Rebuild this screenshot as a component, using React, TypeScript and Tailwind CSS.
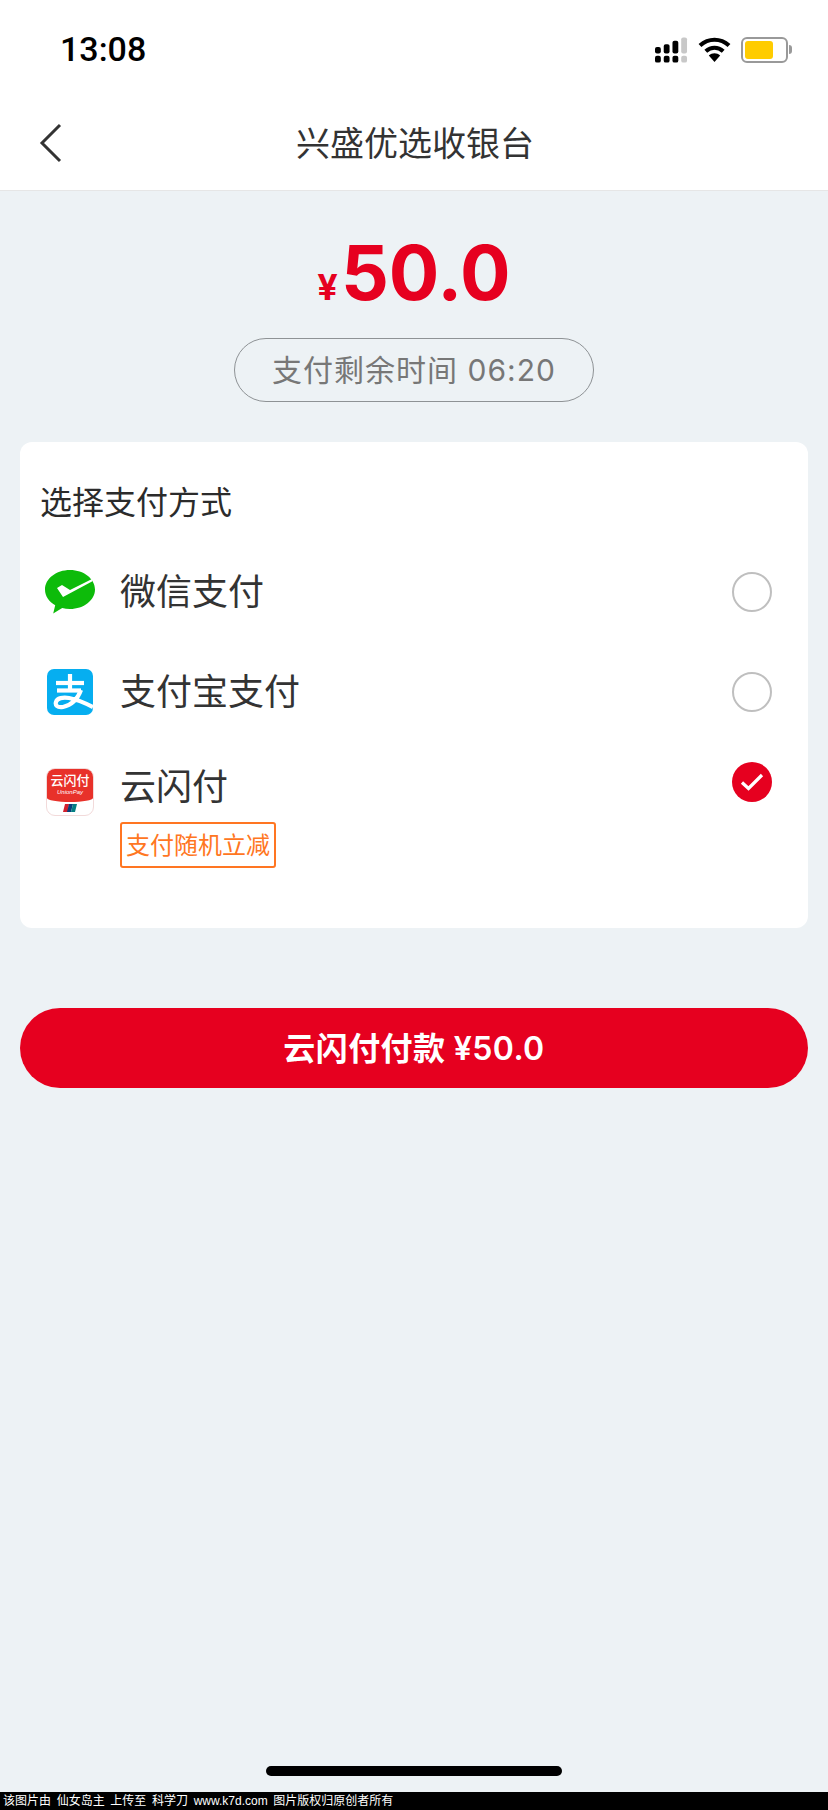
const cjk = "font-['Inter','Noto_Sans_CJK_SC',sans-serif]";

const StatusIcons = () => (
  <div className="flex items-center gap-[10px]">
    {/* signal */}
    <svg className="ml-[1px]" width="33" height="26" viewBox="0 0 34 26">
      <rect x="0" y="10" width="6" height="6.5" rx="2" fill="#000" />
      <rect x="9" y="7" width="6" height="9.5" rx="2" fill="#000" />
      <rect x="18" y="3.5" width="6" height="13" rx="2" fill="#000" />
      <rect x="27" y="0" width="6" height="16.5" rx="2" fill="#c8c8c8" />
      <rect x="0" y="19" width="6" height="7" rx="2" fill="#000" />
      <rect x="9" y="19" width="6" height="7" rx="2" fill="#000" />
      <rect x="18" y="19" width="6" height="7" rx="2" fill="#000" />
      <rect x="27" y="19" width="6" height="7" rx="2" fill="#c8c8c8" />
    </svg>
    {/* wifi */}
    <svg width="33" height="25" viewBox="0 0 33 25">
      <path d="M2 8.5C10.5 .8 22.5 .8 31 8.5" fill="none" stroke="#000" strokeWidth="4.2" />
      <path d="M7.8 14.2C13 9.6 20 9.6 25.2 14.2" fill="none" stroke="#000" strokeWidth="4.2" />
      <path d="M10.8 18.5C14.2 15.6 18.8 15.6 22.2 18.5L16.5 25Z" fill="#000" />
    </svg>
    {/* battery */}
    <div className="flex items-center">
      <div className="flex h-[26px] w-[47px] items-center rounded-[6px] border-2 border-[#999] pl-[2px]">
        <div className="h-[18px] w-[28px] rounded-[3px] bg-[#ffcc00]" />
      </div>
      <div className="ml-[1px] h-[9px] w-[3px] rounded-r-full bg-[#999]" />
    </div>
  </div>
);

const WeChatIcon = () => (
  <svg width="50" height="44" viewBox="0 0 50 44">
    <path
      d="M25 0C11.2 0 0 8.6 0 19.5c0 6.6 4 12.2 10.200 15.800L8.200 43.400l9-5.400c2.400.6 5 1 7.800 1 13.800 0 25-8.800 25-19.500S38.800 0 25 0Z"
      fill="#0dbb0a"
    />
    <path d="M12 18l5-3 8 5 22-11v2.500L18 27Z" fill="#fff" />
  </svg>
);

const AlipayIcon = () => (
  <svg width="46" height="46" viewBox="0 0 46 46">
    <rect width="46" height="46" rx="7" fill="#06aef0" />
    <g fill="none" stroke="#fff" strokeWidth="4.2">
      <path d="M9 14h28" />
      <path d="M23 5v15" />
      <path d="M34 21c-3 8-9 15-18 17-6 1-8-2-7-5 1-4 7-5 13-4 8 1.500 16 5 24 9" />
      <path d="M10 21.500h24" />
    </g>
  </svg>
);

const UnionPayIcon = () => (
  <div className="flex h-[48px] w-[48px] flex-col items-center overflow-hidden rounded-[9px] border border-[#f2dada] bg-white">
    <div className="flex h-[33px] w-full flex-col items-center rounded-b-[50%_4px] bg-[#e8312a] pt-[3px] text-white">
      <span className={`text-[13px] leading-[16px] font-medium ${cjk}`}>云闪付</span>
      <span className="font-['Liberation_Sans',sans-serif] text-[6px] leading-[8px] italic">UnionPay</span>
    </div>
    <svg className="mt-[2px]" width="14" height="8" viewBox="0 0 14 8">
      <path d="M2 0h4L5 8H0Z" fill="#d3202e" />
      <path d="M6 0h4L8 8H4Z" fill="#0a3f7c" />
      <path d="M10 0h4L12 8H8Z" fill="#047f83" />
    </svg>
  </div>
);

const Radio = ({ checked }: { checked?: boolean }) =>
  checked ? (
    <svg width="40" height="40" viewBox="0 0 40 40">
      <circle cx="20" cy="20" r="20" fill="#e6001f" />
      <path d="M10 20.500l6.500 6L30 13" fill="none" stroke="#fff" strokeWidth="3.200" />
    </svg>
  ) : (
    <div className="h-[40px] w-[40px] rounded-full border-2 border-[#bfbfbf]" />
  );

export default function App() {
  return (
    <div className={`flex h-[1810px] w-[828px] flex-col overflow-hidden bg-[#edf2f5] ${cjk}`}>
      {/* Status bar */}
      <div className="flex h-[100px] shrink-0 items-center justify-between bg-white pr-[36px] pb-[1px] pl-[60px]">
        <span className="font-['Roboto',sans-serif] text-[34px] font-medium text-black">13:08</span>
        <StatusIcons />
      </div>

      {/* Nav */}
      <div className="relative flex h-[91px] shrink-0 items-center justify-center border-b border-[#e6e6e6] bg-white pb-[4px] pl-[2px]">
        <svg className="absolute top-[23px] left-[38px]" width="24" height="40" viewBox="0 0 24 40">
          <path d="M22 2L4 20l18 18" fill="none" stroke="#333" strokeWidth="3" />
        </svg>
        <span className="text-[34px] text-[#333]">兴盛优选收银台</span>
      </div>

      {/* Amount */}
      <div className="flex flex-col items-center">
        <div className="mt-[47px] flex h-[70px] items-baseline text-[#e6001f]">
          <span className="mr-[3px] text-[36px] font-bold">¥</span>
          <span className="text-[75px] leading-[70px] font-bold">50.0</span>
        </div>
        <div className="mt-[30px] flex h-[64px] w-[360px] items-center justify-center rounded-full border border-[#8e9295] text-[30px] tracking-[1px] text-[#777]">
          支付剩余时间 06:20
        </div>
      </div>

      {/* Payment methods */}
      <div className="mx-[20px] mt-[40px] h-[486px] rounded-[12px] bg-white pt-[41px]">
        <div className="pl-[20px] text-[32px] leading-[40px] text-[#2b2b2b]">选择支付方式</div>

        <div className="mt-[49px] flex h-[40px] items-center pr-[36px] pl-[25px]">
          <div className="flex w-[75px] items-center">
            <WeChatIcon />
          </div>
          <span className="flex-1 text-[36px] text-[#333]">微信支付</span>
          <Radio />
        </div>

        <div className="mt-[60px] flex h-[40px] items-center pr-[36px] pl-[27px]">
          <div className="flex w-[73px] items-center">
            <AlipayIcon />
          </div>
          <span className="flex-1 text-[36px] text-[#333]">支付宝支付</span>
          <Radio />
        </div>

        <div className="mt-[50px] flex items-start pr-[36px] pl-[26px]">
          <div className="w-[74px] pt-[6px]">
            <UnionPayIcon />
          </div>
          <div className="flex-1">
            <div className="text-[36px] leading-[50px] text-[#333]">云闪付</div>
            <div className="mt-[10px] flex h-[46px] w-[156px] items-center justify-center rounded-[3px] border-2 border-[#ff7622] pt-[2px] text-[24px] whitespace-nowrap text-[#ff7622]">
              支付随机立减
            </div>
          </div>
          <Radio checked />
        </div>
      </div>

      {/* Pay button */}
      <div className="mx-[20px] mt-[80px] flex h-[80px] items-center justify-center rounded-full bg-[#e6001f] pt-[2px] text-[32px] font-semibold tracking-[0.4px] text-white">
        云闪付付款 ¥50.0
      </div>

      {/* Home indicator */}
      <div className="mt-auto flex justify-center pb-[16px]">
        <div className="h-[10px] w-[296px] rounded-full bg-black" />
      </div>

      {/* Watermark */}
      <div className="flex h-[18px] shrink-0 items-center bg-black pl-[3px] font-['Liberation_Sans','Noto_Sans_CJK_SC',sans-serif] text-[12px] leading-[18px] [word-spacing:-0.5px] whitespace-pre text-white">
        该图片由  仙女岛主  上传至  科学刀  www.k7d.com  图片版权归原创者所有
      </div>
    </div>
  );
}
